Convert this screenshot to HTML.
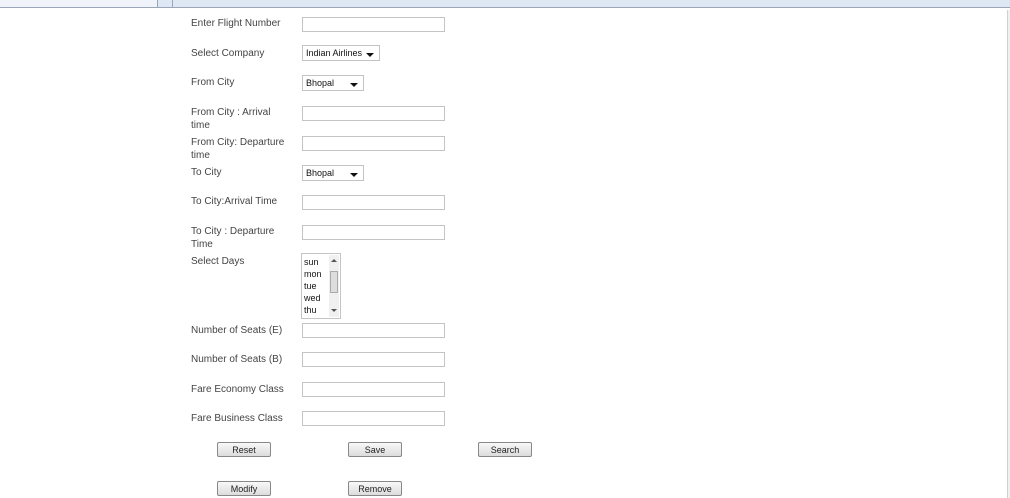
<!DOCTYPE html>
<html><head><style>
body{margin:0;width:1010px;height:498px;background:#fff;position:relative;overflow:hidden;font-family:"Liberation Sans",sans-serif;}
.a{position:absolute}
.l{position:absolute;left:191px;font-size:10px;color:#444;line-height:13px;width:96px}
.i{position:absolute;left:302px;width:141px;height:13px;border:1px solid #c4c4c4;background:#fff}
.s{position:absolute;left:302px;height:16px;border:1px solid #c4c4c4;background:#fff;font-size:9px;color:#111;line-height:15px;padding-left:3px;box-sizing:border-box}
.s:after{content:"";position:absolute;right:5px;top:7px;border-left:4px solid transparent;border-right:4px solid transparent;border-top:4px solid #111}
.b{position:absolute;width:54px;height:15px;border:1px solid #888;border-radius:2px;background:linear-gradient(#f8f8f8,#dcdcdc);font-size:9px;color:#222;text-align:center;line-height:14px;box-sizing:border-box}
</style></head><body>
<div class="a" style="left:0;top:0;width:1010px;height:7px;background:#dde8f4;border-bottom:1px solid #9aa7b8"></div>
<div class="a" style="left:0;top:0;width:157px;height:7px;background:#f0f4fa;border-right:1px solid #9aa7b8"></div>
<div class="a" style="left:172px;top:0;width:1px;height:7px;background:#9aa7b8"></div>
<div class="a" style="left:1007px;top:10px;width:3px;height:488px;background:#eef0f2;border-left:1px solid #d0d0d0"></div>

<div class="l" style="top:17px">Enter Flight Number</div><div class="i" style="top:17px"></div>
<div class="l" style="top:47px">Select Company</div><div class="s" style="top:45px;width:78px">Indian Airlines</div>
<div class="l" style="top:76px">From City</div><div class="s" style="top:75px;width:62px">Bhopal</div>
<div class="l" style="top:106px">From City : Arrival time</div><div class="i" style="top:106px"></div>
<div class="l" style="top:136px">From City: Departure time</div><div class="i" style="top:136px"></div>
<div class="l" style="top:166px">To City</div><div class="s" style="top:165px;width:62px">Bhopal</div>
<div class="l" style="top:195px">To City:Arrival Time</div><div class="i" style="top:195px"></div>
<div class="l" style="top:225px">To City : Departure Time</div><div class="i" style="top:225px"></div>
<div class="l" style="top:255px">Select Days</div>
<div class="a" style="left:301px;top:253px;width:38px;height:64px;border:1px solid #c4c4c4;font-size:9px;line-height:12px;color:#111">
<div style="padding:2px 0 0 2px">sun<br>mon<br>tue<br>wed<br>thu</div>
<div class="a" style="right:1px;top:1px;width:10px;height:62px;background:#f0f0f0"></div>
<div class="a" style="right:2px;top:17px;width:8px;height:22px;background:#ddd;border:1px solid #aaa;box-sizing:border-box"></div>
<div class="a" style="right:3px;top:5px;border-left:3px solid transparent;border-right:3px solid transparent;border-bottom:3px solid #555"></div>
<div class="a" style="right:3px;top:55px;border-left:3px solid transparent;border-right:3px solid transparent;border-top:3px solid #555"></div>
</div>
<div class="l" style="top:324px">Number of Seats (E)</div><div class="i" style="top:323px"></div>
<div class="l" style="top:353px">Number of Seats (B)</div><div class="i" style="top:352px"></div>
<div class="l" style="top:383px">Fare Economy Class</div><div class="i" style="top:382px"></div>
<div class="l" style="top:412px">Fare Business Class</div><div class="i" style="top:411px"></div>

<div class="b" style="left:217px;top:442px">Reset</div>
<div class="b" style="left:348px;top:442px">Save</div>
<div class="b" style="left:478px;top:442px">Search</div>
<div class="b" style="left:217px;top:481px">Modify</div>
<div class="b" style="left:348px;top:481px">Remove</div>
</body></html>
